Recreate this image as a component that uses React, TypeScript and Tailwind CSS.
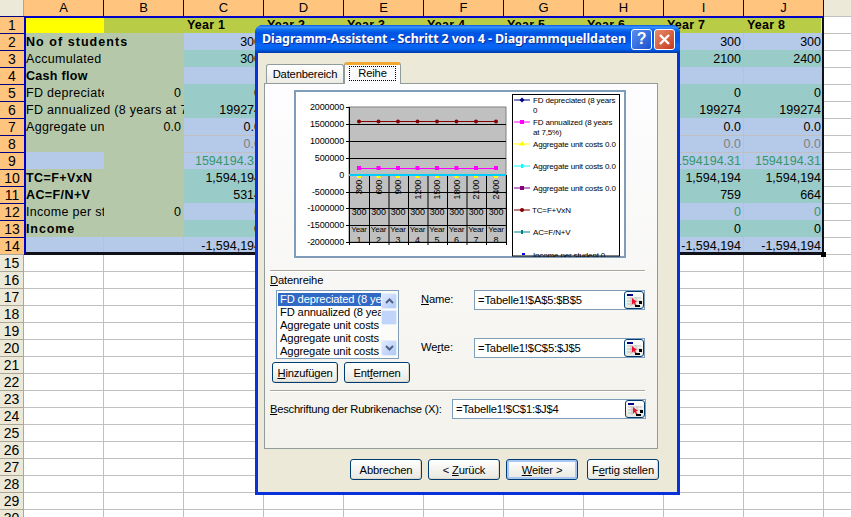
import React from "react";

const colLetters = ["A", "B", "C", "D", "E", "F", "G", "H", "I", "J"];
const sage = "bg-[#b5c9aa]";
const blue = "bg-[#b5c9e8] border-r border-[#c0c0c0] pr-[2px]";
const blueLined = "bg-[#b5c9e8] border-r border-[#c0c0c0] pr-[2px] shadow-[inset_0_1px_0_#c0c0c0]";
const teal = "bg-[#99ccc8] pr-[3px]";

const same = (v: string) => Array(8).fill(v) as string[];

type Row = {
  a: string;
  b?: string;
  span?: boolean;
  bold?: boolean;
  track?: string;
  aFill?: string;
  bFill?: string;
  fill: string;
  color?: string;
  vals: string[];
};

const rows: Row[] = [
  { a: "No of students", span: true, bold: true, track: "tracking-[1.05px]", fill: blue, vals: same("300") },
  { a: "Accumulated", span: true, fill: teal, vals: ["300", "600", "900", "1200", "1500", "1800", "2100", "2400"] },
  { a: "Cash flow", span: true, bold: true, track: "tracking-[0.3px]", fill: blue, vals: same("") },
  { a: "FD depreciated (8 years", b: "0", fill: teal, vals: same("0") },
  { a: "FD annualized (8 years at 7,5%)", span: true, fill: teal, vals: same("199274") },
  { a: "Aggregate unit costs 0.0", b: "0.0", fill: blue, vals: same("0.0") },
  { a: "", span: true, fill: blueLined, color: "text-[#808080]", vals: same("0.0") },
  { a: "", b: "", aFill: "bg-[#b5c9e8]", fill: blueLined, color: "text-[#339966]", vals: same("1594194.31") },
  { a: "TC=F+VxN", span: true, bold: true, track: "tracking-[0.4px]", fill: teal, vals: same("1,594,194") },
  { a: "AC=F/N+V", span: true, bold: true, track: "tracking-[0.4px]", fill: teal, vals: ["5314", "2657", "1771", "1328", "1063", "886", "759", "664"] },
  { a: "Income per student", b: "0", fill: blue, color: "text-[#339966]", vals: same("0") },
  { a: "Income", span: true, bold: true, track: "tracking-[0.9px]", fill: teal, vals: same("0") },
  { a: "", b: "", aFill: blue, bFill: blue, fill: blue, vals: same("-1,594,194") },
];

function RowHead({ n }: { n: number }) {
  const selected = n <= 14;
  return (
    <div
      className={
        selected
          ? "bg-[#ffc57f] border-t border-[#000080] text-center text-[14px] leading-[17px]"
          : "bg-[#ece9d8] border-t border-r border-[#aca899] text-center text-[14px] leading-[17px]"
      }
    >
      {n}
    </div>
  );
}

function Sheet() {
  const blank = Array.from({ length: 16 }, (_, i) => i + 15);
  return (
    <div className="grid grid-cols-[24px_repeat(10,80px)_27px] grid-rows-[16px] auto-rows-[17px] text-[12.5px] text-black">
      <div className="bg-[#ece9d8] border-r border-[#aca899]" />
      {colLetters.map((c) => (
        <div key={c} className="bg-[#ffc57f] border-r border-[#000080] text-center text-[13px] leading-[16px]">
          {c}
        </div>
      ))}
      <div className="bg-[#ece9d8]" />

      <RowHead n={1} />
      <div className="bg-[#ffff00]" />
      <div className="bg-[#b9cc45]" />
      {Array.from({ length: 8 }, (_, i) => (
        <div
          key={i}
          className={
            "bg-[#b9cc45] pl-[3px] font-bold tracking-[0.2px] leading-[19px] whitespace-nowrap overflow-hidden" +
            (i === 7 ? " border-r-[3px] border-[#ffff00]" : "")
          }
        >
          Year {i + 1}
        </div>
      ))}
      <div className="bg-white border-t border-[#c0c0c0]" />

      {rows.map((r, i) => (
        <React.Fragment key={i}>
          <RowHead n={i + 2} />
          {r.span ? (
            <div className={"col-span-2 pl-[2px] leading-[19px] whitespace-nowrap overflow-hidden " + sage + (r.bold ? " font-bold " + r.track : " tracking-[0.3px]")}>
              {r.a}
            </div>
          ) : (
            <>
              <div className={"pl-[2px] leading-[19px] tracking-[0.3px] whitespace-nowrap overflow-hidden " + (r.aFill ?? sage)}>{r.a}</div>
              <div className={"pr-[3px] text-right leading-[19px] " + (r.bFill ?? sage)}>{r.b}</div>
            </>
          )}
          {r.vals.map((v, j) => (
            <div key={j} className={"text-right leading-[19px] whitespace-nowrap " + r.fill + " " + (r.color ?? "")}>
              {v}
            </div>
          ))}
          <div className="bg-white border-t border-[#c0c0c0]" />
        </React.Fragment>
      ))}

      {blank.map((n) => (
        <React.Fragment key={n}>
          <RowHead n={n} />
          {colLetters.map((c) => (
            <div key={c} className="bg-white border-r border-t border-[#c0c0c0]" />
          ))}
          <div className="bg-white border-t border-[#c0c0c0]" />
        </React.Fragment>
      ))}
    </div>
  );
}

const catX = [359, 378.5, 398, 417.5, 437, 456.5, 476, 496];
const tickX = [349, 369, 388.5, 408, 427.5, 447, 466.5, 486, 506];
const yLabels = [
  ["2000000", 107],
  ["1500000", 124],
  ["1000000", 141],
  ["500000", 158],
  ["0", 175],
  ["-500000", 192],
  ["-1000000", 208],
  ["-1500000", 225],
  ["-2000000", 242],
] as const;
const accumulated = ["300", "600", "900", "1200", "1500", "1800", "2100", "2400"];

function Chart() {
  return (
    <svg
      viewBox="294 90 332 168"
      className="block w-[332px] h-[168px] ml-[29px] mt-[6px] bg-white text-[9px]"
    >
      <rect x="295" y="91" width="330" height="166" fill="none" stroke="#7f9db9" strokeWidth="2" />
      <rect x="349" y="107" width="157" height="135" fill="#c0c0c0" stroke="#808080" />
      {[124, 141, 158, 192, 208, 225].map((y) => (
        <line key={y} x1="346" x2="506" y1={y + 0.5} y2={y + 0.5} stroke="#000" />
      ))}
      <line x1="349.5" x2="349.5" y1="107" y2="245" stroke="#000" />
      <line x1="346" x2="349" y1="107.5" y2="107.5" stroke="#000" />
      <line x1="346" x2="506" y1="242.5" y2="242.5" stroke="#000" />
      {tickX.map((x) => (
        <line key={x} x1={x + 0.5} x2={x + 0.5} y1="175" y2="245" stroke="#000" />
      ))}
      {yLabels.map(([t, y]) => (
        <text key={t} x="344" y={y + 3} textAnchor="end" fill="#000">
          {t}
        </text>
      ))}
      {catX.map((x, i) => (
        <g key={x}>
          <text x={x + 3} y="180" textAnchor="end" transform={"rotate(-90 " + (x + 3) + " 180)"} fill="#000">
            {accumulated[i]}
          </text>
          <text x={x} y="215" textAnchor="middle" fill="#000">300</text>
          <text x={x} y="232" textAnchor="middle" className="text-[8px]" fill="#000">Year</text>
          <text x={x} y="243" textAnchor="middle" fill="#000">{i + 1}</text>
        </g>
      ))}
      <line x1="359" x2="496" y1="121.5" y2="121.5" stroke="#800000" />
      <line x1="359" x2="496" y1="168.5" y2="168.5" stroke="#ff00ff" />
      <line x1="349" x2="506" y1="175" y2="175" stroke="#00ccff" strokeWidth="2" />
      {catX.map((x) => (
        <g key={x}>
          <circle cx={x} cy="121.5" r="2" fill="#800000" />
          <rect x={x - 2} y="166" width="4" height="4" fill="#ff00ff" />
          <rect x={x - 2} y="176" width="4" height="2" fill="#ffff00" />
        </g>
      ))}

      <svg x="512" y="94" width="108" height="163" viewBox="512 94 108 163" className="text-[8px]">
        <rect x="512.5" y="94.5" width="107" height="161.5" fill="#fff" stroke="#000" />
        <line x1="514" x2="530" y1="100" y2="100" stroke="#000080" />
        <path d="M522 97.5l2.5 2.5-2.5 2.5-2.5-2.5z" fill="#000080" />
        <text x="533" y="103" fill="#000">FD depreciated (8 years</text>
        <text x="533" y="113" fill="#000">0</text>
        <line x1="514" x2="530" y1="122" y2="122" stroke="#ff00ff" />
        <rect x="520" y="120" width="4" height="4" fill="#ff00ff" />
        <text x="533" y="125" fill="#000">FD annualized (8 years</text>
        <text x="533" y="135" fill="#000">at 7,5%)</text>
        <line x1="514" x2="530" y1="144" y2="144" stroke="#ffff00" />
        <path d="M522 141l3 4.500h-6z" fill="#ffff00" />
        <text x="533" y="147" fill="#000">Aggregate unit costs 0.0</text>
        <line x1="514" x2="530" y1="166" y2="166" stroke="#00ffff" />
        <rect x="521" y="164" width="2" height="4" fill="#00ffff" />
        <text x="533" y="169" fill="#000">Aggregate unit costs 0.0</text>
        <line x1="514" x2="530" y1="188" y2="188" stroke="#800080" />
        <rect x="520" y="186" width="4" height="4" fill="#800080" />
        <text x="533" y="191" fill="#000">Aggregate unit costs 0.0</text>
        <line x1="514" x2="530" y1="210" y2="210" stroke="#800000" />
        <circle cx="522" cy="210" r="2" fill="#800000" />
        <text x="532" y="213" fill="#000">TC=F+VxN</text>
        <line x1="514" x2="530" y1="232" y2="232" stroke="#008080" />
        <rect x="521" y="230" width="2" height="4" fill="#008080" />
        <text x="533" y="235" fill="#000">AC=F/N+V</text>
        <rect x="522" y="253" width="3" height="2" fill="#0000ff" />
        <text x="533" y="258" fill="#000">Income per student 0</text>
      </svg>
    </svg>
  );
}

function XpButton({ w, glow, children }: { w: string; glow?: boolean; children: React.ReactNode }) {
  return (
    <button
      className={
        w +
        " h-[21px] rounded-[3px] border border-[#003c74] bg-gradient-to-b from-white to-[#e8e7e0] text-center leading-[18px] text-black whitespace-nowrap " +
        (glow ? "shadow-[inset_0_0_0_2px_#a9c5f2]" : "shadow-[inset_-1px_-1px_0_#dcd8cc]")
      }
    >
      {children}
    </button>
  );
}

function RangeIcon() {
  return (
    <svg viewBox="0 0 16 13" className="w-[16px] h-[13px]">
      <rect x="1" y="0" width="6" height="2" fill="#000080" />
      <path d="M1 4h14M1 7h14M1 10h8M5 3v9M10 3v5" stroke="#c0c0c0" fill="none" />
      <path d="M6 4l5 4-2 .5 1.500 2.500-1.500.5-1-2.500-2 1.500z" fill="#e8102a" />
      <rect x="9" y="11" width="5" height="2" fill="#000" />
      <rect x="13" y="7" width="3" height="3" fill="#000" />
    </svg>
  );
}

function RangeField({ value, w }: { value: string; w: string }) {
  return (
    <div className={w + " h-[20px] flex items-center border border-[#7f9db9] bg-white pl-[3px]"}>
      <span className="flex-1 whitespace-nowrap">{value}</span>
      <span className="w-[20px] h-[18px] flex items-center justify-center rounded-[3px] border border-[#003c74] bg-gradient-to-b from-white to-[#e8e7e0]">
        <RangeIcon />
      </span>
    </div>
  );
}

function ScrollArrow({ up }: { up?: boolean }) {
  return (
    <span className="w-[16px] h-[16px] flex items-center justify-center rounded-[2px] border border-[#e6eefc] bg-gradient-to-br from-[#e1eafe] to-[#aec8f7]">
      <svg viewBox="0 0 9 6" className="w-[9px] h-[6px]">
        <path d={up ? "M1 5l3.500-3.500L8 5" : "M1 1l3.500 3.500L8 1"} fill="none" stroke="#4d6185" strokeWidth="2" />
      </svg>
    </span>
  );
}

function ListBox() {
  const items = ["FD annualized (8 years at 7,5%)", "Aggregate unit costs 0.0", "Aggregate unit costs 0.0", "Aggregate unit costs 0.0"];
  return (
    <div className="ml-[4px] w-[123px] h-[69px] flex border border-[#7f9db9] bg-white">
      <div className="w-[104px] pt-[2px] pl-[1px] overflow-hidden">
        <div className="h-[13px] leading-[13px] pl-[2px] bg-[#316ac5] text-white whitespace-nowrap">
          FD depreciated (8 years
        </div>
        {items.map((t, i) => (
          <div key={i} className="h-[13px] leading-[13px] pl-[2px] whitespace-nowrap">
            {t}
          </div>
        ))}
      </div>
      <div className="w-[17px] flex flex-col justify-between py-[2px] bg-[#fbfbf8]">
        <div className="flex flex-col gap-[1px]">
          <ScrollArrow up />
          <span className="w-[16px] h-[15px] rounded-[2px] border border-[#e6eefc] bg-[#c1d5fb]" />
        </div>
        <ScrollArrow />
      </div>
    </div>
  );
}

function Separator() {
  return <div className="ml-[5px] w-[375px] h-[2px] bg-[#aca899] border-b border-white" />;
}

function TitleBar() {
  return (
    <div className="h-[28px] shrink-0 flex items-center rounded-t-[8px] pl-[7px] pr-[5px] bg-[linear-gradient(180deg,#0a5be0_0%,#3c93ff_8%,#0f6fee_16%,#0054e3_28%,#0055eb_56%,#0a66f5_72%,#0262ee_86%,#0049c8_94%,#003aa8_100%)]">
      <span className="flex-1 min-w-0 font-['Noto_Sans',sans-serif] font-bold text-[12.5px] tracking-[-0.1px] text-white whitespace-nowrap [text-shadow:1px_1px_0_#0f2f8f]">
        Diagramm-Assistent - Schritt 2 von 4 - Diagrammquelldaten
      </span>
      <span className="w-[21px] h-[21px] mr-[2px] flex items-center justify-center rounded-[3px] border border-white bg-gradient-to-br from-[#5a8df0] to-[#1a50d0] text-white font-bold text-[16px] font-['Liberation_Sans',sans-serif]">
        ?
      </span>
      <span className="w-[21px] h-[21px] flex items-center justify-center rounded-[3px] border border-white bg-gradient-to-br from-[#e88a6c] to-[#c5371a]">
        <svg viewBox="0 0 13 13" className="w-[13px] h-[13px]">
          <path d="M2 2l9 9M11 2l-9 9" stroke="#fff" strokeWidth="2.400" fill="none" />
        </svg>
      </span>
    </div>
  );
}

function Dialog() {
  return (
    <div className="absolute left-[255px] top-[25px] w-[425px] h-[470px] flex flex-col rounded-t-[8px] bg-[#0831d9] text-[11.2px] tracking-[-0.15px] text-black">
      <TitleBar />
      <div className="flex-1 mx-[3px] mb-[3px] bg-[#ece9d8] pt-[9px] pl-[6px]">
        <div className="h-[21px] flex items-end pl-[2px]">
          <div className="w-[78px] h-[19px] text-center leading-[19px] rounded-t-[3px] border border-b-0 border-[#919b9c] bg-gradient-to-b from-white to-[#ecebe5]">
            Datenbereich
          </div>
          <div className="relative z-10 w-[57px] h-[22px] -mb-px border-t-[3px] border-t-[#f0a830] rounded-t-[3px] border-x border-x-[#919b9c] bg-[#fcfcfe] px-[4px] pt-[1px]">
            <span className="block h-[15px] text-center leading-[13px] border border-dotted border-black">Reihe</span>
          </div>
        </div>

        <div className="w-[394px] h-[366px] border border-[#919b9c] bg-gradient-to-b from-[#fdfdff] to-[#f3f2ec]">
          <Chart />
          <div className="h-[12px]" />
          <Separator />
          <div className="ml-[5px] h-[18px] pt-[1px] leading-[14px]">
            <u>D</u>atenreihe
          </div>
          <div className="flex ml-[7px] h-[92px]">
            <div className="w-[138px] flex flex-col gap-[3px]">
              <ListBox />
              <div className="flex gap-[6px]">
                <XpButton w="w-[66px]">
                  <u>H</u>inzufügen
                </XpButton>
                <XpButton w="w-[66px]">
                  Ent<u>f</u>ernen
                </XpButton>
              </div>
            </div>
            <div className="ml-[11px] flex flex-col gap-[28px]">
              <div className="flex items-center">
                <span className="w-[53px] -mt-[2px]">
                  <u>N</u>ame:
                </span>
                <RangeField value="=Tabelle1!$A$5:$B$5" w="w-[171px]" />
              </div>
              <div className="flex items-center">
                <span className="w-[53px] -mt-[2px]">
                  We<u>r</u>te:
                </span>
                <RangeField value="=Tabelle1!$C$5:$J$5" w="w-[171px]" />
              </div>
            </div>
          </div>
          <div className="h-[8px]" />
          <Separator />
          <div className="flex items-center ml-[5px] mt-[7px]">
            <span className="w-[182px] whitespace-nowrap tracking-[-0.25px]">
              <u>B</u>eschriftung der Rubrikenachse (X):
            </span>
            <RangeField value="=Tabelle1!$C$1:$J$4" w="w-[194px]" />
          </div>
        </div>

        <div className="flex mt-[10px] ml-[86px]">
          <XpButton w="w-[72px] mr-[6px]">Abbrechen</XpButton>
          <XpButton w="w-[72px] mr-[6px]">
            &lt; <u>Z</u>urück
          </XpButton>
          <XpButton w="w-[72px] mr-[9px]" glow>
            <u>W</u>eiter &gt;
          </XpButton>
          <XpButton w="w-[72px]">
            F<u>e</u>rtig stellen
          </XpButton>
        </div>
      </div>
    </div>
  );
}

export default function App() {
  return (
    <div className="relative w-[851px] h-[517px] overflow-hidden bg-white font-['Liberation_Sans',Arial,sans-serif]">
      <Sheet />
      {/* selection outline around A1:J14 */}
      <div className="absolute left-[24px] top-[16px] w-[800px] h-[239px] border-2 border-t-[#0000c8] border-l-[#0000c8] border-r-[#101018] border-b-[3px] border-b-[#101018]" />
      <div className="absolute left-[821px] top-[252px] w-[5px] h-[5px] bg-black" />
      <Dialog />
    </div>
  );
}
